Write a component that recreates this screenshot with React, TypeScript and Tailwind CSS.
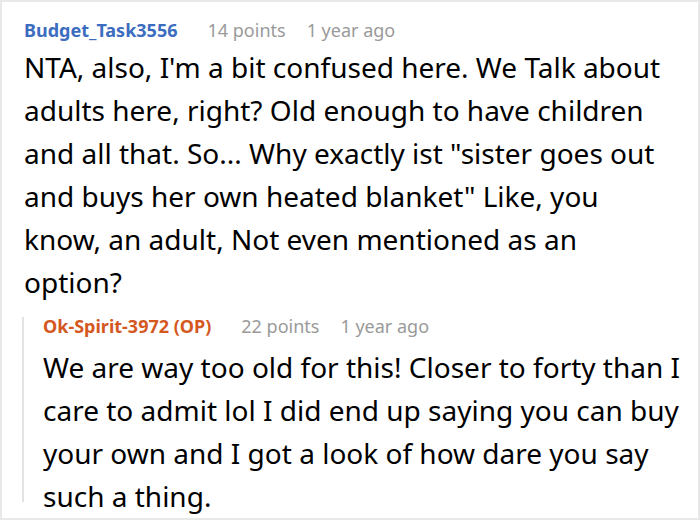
const comments = {
  parent: {
    author: "Budget_Task3556",
    points: "14 points",
    time: "1 year ago",
    body: 'NTA, also, I\'m a bit confused here. We Talk about adults here, right? Old enough to have children and all that. So... Why exactly ist "sister goes out and buys her own heated blanket" Like, you know, an adult, Not even mentioned as an option?',
  },
  reply: {
    author: "Ok-Spirit-3972 (OP)",
    points: "22 points",
    time: "1 year ago",
    body: "We are way too old for this! Closer to forty than I care to admit lol I did end up saying you can buy your own and I got a look of how dare you say such a thing.",
  },
};

function Meta({ author, points, time, color }: { author: string; points: string; time: string; color: string }) {
  return (
    <div className="flex items-center text-[18px] leading-[22px] whitespace-nowrap">
      <span className={`font-bold ${color}`}>{author}</span>
      <span className="ml-[30px] text-[#9a9a9a]">{points}</span>
      <span className="ml-[21px] text-[#9a9a9a]">{time}</span>
    </div>
  );
}

export default function App() {
  return (
    <div
      className="w-[700px] h-[520px] overflow-hidden bg-white border-2 border-[#e8e8e8] text-black"
      style={{ fontFamily: '"Noto Sans", "Open Sans", sans-serif' }}
    >
      <div className="pl-[22px] pr-[16px] pt-[17px]">
        <Meta {...comments.parent} color="text-[#3b6cbf]" />
        <p className="mt-[5px] text-[28px] leading-[43px]">{comments.parent.body}</p>

        <div className="mt-[11px] -ml-[2px] flex">
          <div className="w-[2px] mt-[2px] mb-[16px] bg-[#e3e3e3] shrink-0" />
          <div className="pl-[19px]">
            <Meta {...comments.reply} color="text-[#d4581f]" />
            <p className="mt-[9px] text-[28px] leading-[43px]">{comments.reply.body}</p>
          </div>
        </div>
      </div>
    </div>
  );
}
